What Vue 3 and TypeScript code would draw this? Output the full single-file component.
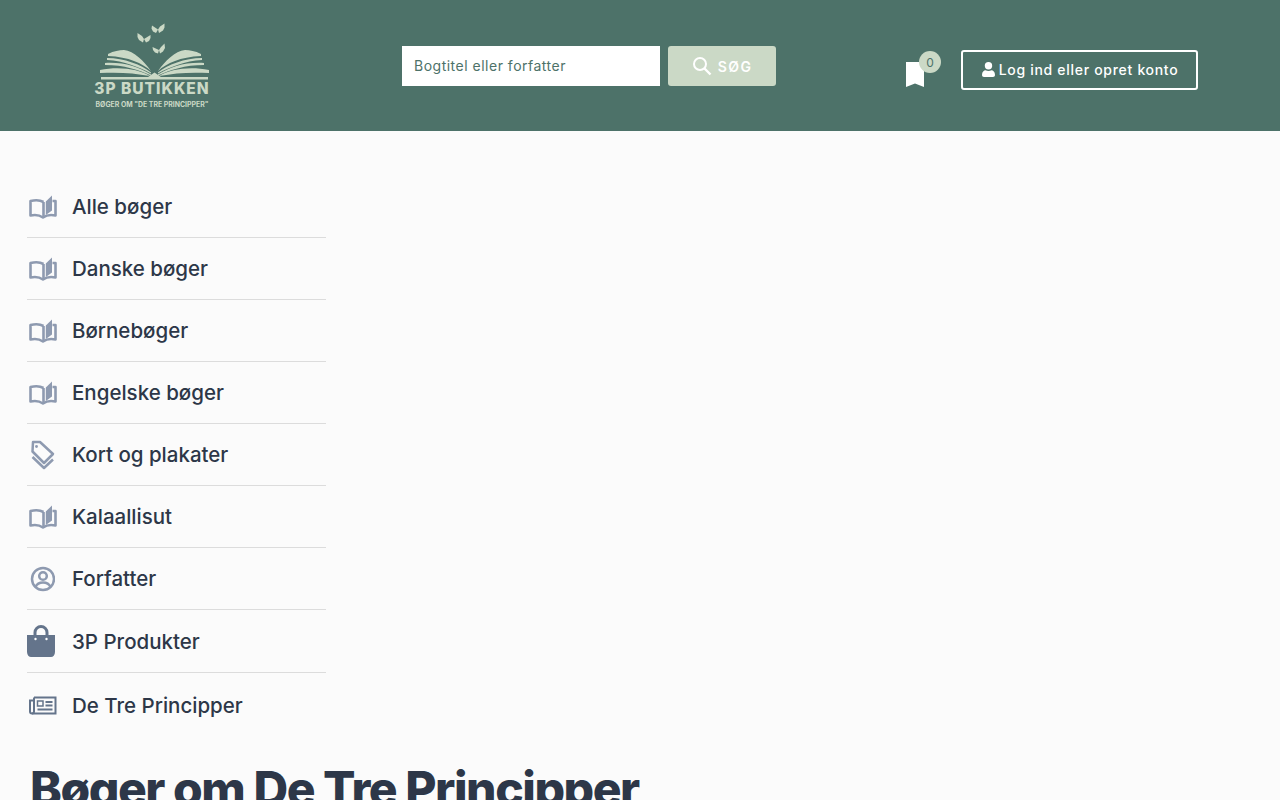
<script setup lang="ts">
type MenuItem = { label: string; icon: 'book' | 'tag' | 'user' | 'bag' | 'news' }

const items: MenuItem[] = [
  { label: 'Alle bøger', icon: 'book' },
  { label: 'Danske bøger', icon: 'book' },
  { label: 'Børnebøger', icon: 'book' },
  { label: 'Engelske bøger', icon: 'book' },
  { label: 'Kort og plakater', icon: 'tag' },
  { label: 'Kalaallisut', icon: 'book' },
  { label: 'Forfatter', icon: 'user' },
  { label: '3P Produkter', icon: 'bag' },
  { label: 'De Tre Principper', icon: 'news' },
]
</script>

<template>
  <div class="page">
    <header class="header">
      <a class="logo" href="#">
        <svg width="116" height="86" viewBox="0 0 116 86">
          <g fill="#cbd9c6">
            <path transform="translate(64 5.500)" d="M0 1-6-3-6.500 0-5 3-2 4.500ZM0 1 2-2 6.500-5 6.500-1 5 2 1 4.500Z" />
            <path transform="translate(50 15)" d="M0 1 6.500-3 6.500 0 5 3 2 4.500ZM0 1-2-2-6.500-5-6.500-1-5 2-1 4.500Z" />
            <path transform="translate(65 26)" d="M0 1-6.500-2-6 1-4 3.500-1 4.500ZM0 1 2-2 5.500-5.500 6 -1 4 2.500 1 4.500Z" />
            <path d="M14 31C20 28 25 27 30 27 40 28 50 38 57 48 48 40 35 34 14 33Z" />
            <path d="M13 35C30 35 48 42 57 49.500V50.500C45 44 30 38 13 37Z" />
            <path d="M11 40C30 39 45 44 57 51.500V52.500C45 47 30 42 11 42Z" />
            <path d="M6 47C25 43 45 46 56 53 40 50 25 49 6 50Z" />
            <g transform="translate(121 0) scale(-1 1)">
              <path d="M14 31C20 28 25 27 30 27 40 28 50 38 57 48 48 40 35 34 14 33Z" />
              <path d="M13 35C30 35 48 42 57 49.500V50.500C45 44 30 38 13 37Z" />
              <path d="M11 40C30 39 45 44 57 51.500V52.500C45 47 30 42 11 42Z" />
              <path d="M6 47C25 43 45 46 56 53 40 50 25 49 6 50Z" />
            </g>
            <path d="M7 54H54L60.500 49.500 67 54H114V56.500H7Z" />
          </g>
          <text class="logo-title" x="58" y="71" text-anchor="middle">3P BUTIKKEN</text>
          <text class="logo-sub" x="58" y="84" text-anchor="middle">BØGER OM "DE TRE PRINCIPPER"</text>
        </svg>
      </a>

      <form class="search" @submit.prevent>
        <input class="search-input" type="text" placeholder="Bogtitel eller forfatter" />
        <button class="search-btn" type="submit">
          <svg width="20" height="20" viewBox="0 0 20 20" fill="none" stroke="#fff" stroke-width="2">
            <circle cx="8" cy="8" r="6" />
            <path d="M12.500 12.500 18.500 18.500" stroke-width="2.400" />
          </svg>
          <span>SØG</span>
        </button>
      </form>

      <div class="actions">
        <a class="saved" href="#">
          <svg width="20" height="25" viewBox="0 0 20 25"><path d="M1 0H19V25L10 21.500 1 25Z" fill="#fff" /></svg>
          <span class="badge">0</span>
        </a>
        <a class="login" href="#">
          <svg width="13" height="15" viewBox="0 0 13 15" fill="#fff">
            <circle cx="6.500" cy="3.700" r="3.700" />
            <path d="M0 13C0 9.800 2 8.300 3.500 8.300 5.500 9.300 7.500 9.300 9.500 8.300 11 8.300 13 9.800 13 13 13 14.200 12.200 15 11 15H2C.8 15 0 14.200 0 13Z" />
          </svg>
          <span>Log ind eller opret konto</span>
        </a>
      </div>
    </header>

    <main class="main">
      <nav class="menu">
        <a v-for="item in items" :key="item.label" class="menu-item" :class="'is-' + item.icon" href="#">
          <span class="menu-icon">
            <svg v-if="item.icon === 'book'" width="28" height="24" viewBox="0 0 28 24" fill="none" stroke="#8e9ab0" stroke-width="2.600">
              <path d="M14.500 7C11 5 6 5 1.500 6V20.500C6 19.500 10.500 20 14 22.500 17.500 20 22 19.500 26.500 20.500V6H23.500" stroke-linejoin="round" />
              <path d="M14.500 7V21" />
              <path d="M16.800 6.500 23 .5V15.500L16.800 20Z" fill="#8e9ab0" stroke="none" />
            </svg>
            <svg v-else-if="item.icon === 'tag'" width="26" height="30" viewBox="0 0 26 30" fill="none" stroke="#8e9ab0" stroke-width="2.500" stroke-linejoin="round">
              <path d="M4 2H11L24 14 15 23 3.500 11.500Z" />
              <circle cx="7.500" cy="6.500" r="1.400" fill="#8e9ab0" stroke="none" />
              <path d="M3.500 17 15 28 24 19.500" />
            </svg>
            <svg v-else-if="item.icon === 'user'" width="26" height="26" viewBox="0 0 26 26" fill="none" stroke="#8e9ab0" stroke-width="2.500">
              <circle cx="14" cy="13" r="11" />
              <circle cx="14" cy="10" r="3.800" />
              <path d="M6.500 21C8 17.500 11 16.500 14 16.500S20 17.500 21.500 21" />
            </svg>
            <svg v-else-if="item.icon === 'bag'" width="28" height="32" viewBox="0 0 28 32">
              <path d="M8 12V7.500A6 6 0 0 1 20 7.500V12" fill="none" stroke="#64748b" stroke-width="3" />
              <path d="M0 10H28V27C28 30 26 32 24 32H4C2 32 0 30 0 27Z" fill="#64748b" />
              <circle cx="8.500" cy="14" r="1.200" fill="#fff" />
              <circle cx="19.500" cy="14" r="1.200" fill="#fff" />
            </svg>
            <svg v-else width="28" height="19" viewBox="0 0 28 19" fill="none" stroke="#64748b" stroke-width="2">
              <path d="M5 1.500H26.500V17.500H3" />
              <path d="M5 1.500V15.500C5 17 4 17.500 3 17.500S1 17 1 15.500V4.500H5" />
              <path d="M8.500 5H14V10H8.500Z" stroke-width="1.500" />
              <path d="M16.500 6H23.500M16.500 9.500H23.500M8.500 13.500H23.500" stroke-width="1.800" />
            </svg>
          </span>
          <span class="menu-label">{{ item.label }}</span>
        </a>
      </nav>

      <h1 class="title">Bøger om De Tre Principper</h1>
    </main>
  </div>
</template>

<style>
html,
body {
  margin: 0;
  height: 100%;
  overflow: hidden;
  background: #fbfbfb;
}
</style>

<style scoped>
.page {
  font-family: Inter, 'Open Sans', sans-serif;
  color: #2d3748;
}

.header {
  height: 131px;
  background: #4d7269;
  display: flex;
  align-items: flex-start;
  box-sizing: border-box;
}

.logo {
  margin: 23px 0 0 94px;
  width: 116px;
  height: 86px;
  display: block;
}

.logo-title {
  font-size: 15.500px;
  font-weight: 800;
  fill: #cbd9c6;
  letter-spacing: 1px;
}

.logo-sub {
  font-size: 6.900px;
  font-weight: 700;
  fill: #cbd9c6;
}

.search {
  display: flex;
  gap: 8px;
  margin: 46px 0 0 192px;
}

.search-input {
  width: 258px;
  height: 40px;
  box-sizing: border-box;
  border: 0;
  padding: 0 12px 2px;
  font-family: inherit;
  font-size: 14px;
  letter-spacing: 0.5px;
  background: #fff;
  color: #4d7269;
  outline: none;
}

.search-input::placeholder {
  color: #4d7269;
  opacity: 1;
}

.search-btn {
  width: 108px;
  height: 40px;
  border: 0;
  border-radius: 3px;
  background: #cbd9c6;
  color: #fff;
  display: flex;
  align-items: center;
  justify-content: center;
  gap: 6px;
  font-family: inherit;
  font-size: 14px;
  font-weight: 600;
  letter-spacing: 1.400px;
  padding: 0;
}

.actions {
  display: flex;
  align-items: center;
  margin: 50px 0 0 129px;
}

.saved {
  position: relative;
  display: block;
  width: 20px;
  height: 25px;
  margin-top: 9px;
}

.badge {
  position: absolute;
  left: 14px;
  top: -11px;
  width: 22px;
  height: 22px;
  border-radius: 50%;
  background: #cbd9c6;
  color: #4d7269;
  font-size: 12px;
  display: flex;
  align-items: center;
  justify-content: center;
}

.login {
  margin-left: 36px;
  width: 237px;
  height: 40px;
  box-sizing: border-box;
  border: 2px solid #fff;
  border-radius: 3px;
  padding: 0 0 1px 1px;
  color: #fff;
  font-size: 14px;
  font-weight: 500;
  letter-spacing: 0.7px;
  text-decoration: none;
  display: flex;
  align-items: center;
  justify-content: center;
  gap: 4px;
}

.main {
  padding: 45px 0 0 27px;
}

.menu {
  width: 299px;
  display: flex;
  flex-direction: column;
}

.menu-item {
  height: 62px;
  box-sizing: border-box;
  display: flex;
  align-items: center;
  border-bottom: 1px solid #dcdcdc;
  text-decoration: none;
  color: #2d3748;
}

.menu-item.is-bag {
  height: 63px;
}

.menu-item:last-child {
  border-bottom: 0;
  height: 65px;
}

.menu-icon {
  width: 45px;
  flex: none;
  display: flex;
  align-items: center;
}

.is-book .menu-icon,
.is-tag .menu-icon,
.is-user .menu-icon,
.is-news .menu-icon {
  padding-left: 2px;
  width: 43px;
}

.menu-label {
  font-size: 20.500px;
  font-weight: 500;
}

.title {
  margin: 15px 0 0 3px;
  font-size: 48px;
  line-height: 72px;
  font-weight: 800;
  letter-spacing: -1.450px;
  white-space: nowrap;
}
</style>
